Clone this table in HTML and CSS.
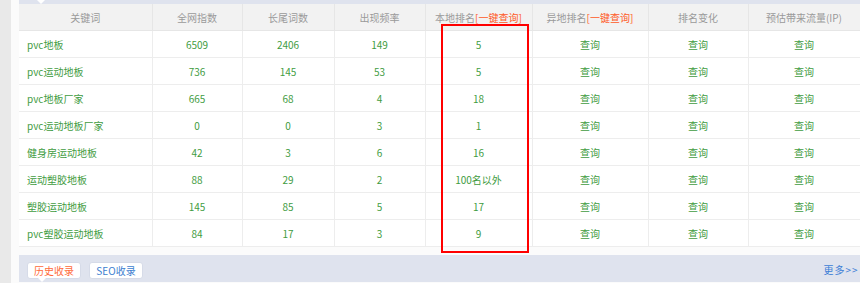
FILE: index.html
```html
<!DOCTYPE html>
<html lang="zh-CN">
<head>
<meta charset="utf-8">
<link rel="stylesheet" href="styles.css">
</head>
<body>
<div class="page">
  <div class="side"></div>
  <div class="main">
    <div class="topbar"><span class="notch"></span></div>
    <table class="grid">
      <colgroup>
        <col style="width:133px"><col style="width:90px"><col style="width:92px"><col style="width:91px">
        <col style="width:107px"><col style="width:116px"><col style="width:100px"><col style="width:112px">
      </colgroup>
      <thead>
        <tr>
          <th>关键词</th><th>全网指数</th><th>长尾词数</th><th>出现频率</th>
          <th>本地排名<span class="hl">[一键查询]</span></th>
          <th>异地排名<span class="hl">[一键查询]</span></th>
          <th>排名变化</th><th>预估带来流量(IP)</th>
        </tr>
      </thead>
      <tbody>
        <tr><td class="kw">pvc地板</td><td>6509</td><td>2406</td><td>149</td><td>5</td><td>查询</td><td>查询</td><td>查询</td></tr>
        <tr><td class="kw">pvc运动地板</td><td>736</td><td>145</td><td>53</td><td>5</td><td>查询</td><td>查询</td><td>查询</td></tr>
        <tr><td class="kw">pvc地板厂家</td><td>665</td><td>68</td><td>4</td><td>18</td><td>查询</td><td>查询</td><td>查询</td></tr>
        <tr><td class="kw">pvc运动地板厂家</td><td>0</td><td>0</td><td>3</td><td>1</td><td>查询</td><td>查询</td><td>查询</td></tr>
        <tr><td class="kw">健身房运动地板</td><td>42</td><td>3</td><td>6</td><td>16</td><td>查询</td><td>查询</td><td>查询</td></tr>
        <tr><td class="kw">运动塑胶地板</td><td>88</td><td>29</td><td>2</td><td>100名以外</td><td>查询</td><td>查询</td><td>查询</td></tr>
        <tr><td class="kw">塑胶运动地板</td><td>145</td><td>85</td><td>5</td><td>17</td><td>查询</td><td>查询</td><td>查询</td></tr>
        <tr><td class="kw">pvc塑胶运动地板</td><td>84</td><td>17</td><td>3</td><td>9</td><td>查询</td><td>查询</td><td>查询</td></tr>
      </tbody>
    </table>
    <div class="footer">
      <span class="btn active">历史收录</span>
      <span class="btn seo">SEO收录</span>
      <span class="more">更多&gt;&gt;</span>
    </div>
    <div class="redbox"></div>
  </div>
</div>
</body>
</html>
```

FILE: styles.css
```css
html, body {
  margin: 0;
  padding: 0;
  background: #fff;
}
body {
  font-family: "Noto Sans CJK SC", "Noto Sans", sans-serif;
  font-size: 10px;
  width: 860px;
  height: 283px;
  overflow: hidden;
}
.page {
  display: flex;
  height: 283px;
}
.side {
  width: 11px;
  flex: none;
  background: #e9e9e9;
}
.main {
  position: relative;
  flex: 1;
  padding-left: 8px;
  background: #fbfbfb;
  display: flex;
  flex-direction: column;
}
.topbar {
  position: relative;
  height: 4px;
  background: #dfe3ee;
}
.notch {
  position: absolute;
  left: 18px;
  top: 0;
  width: 0;
  height: 0;
  border-left: 4px solid transparent;
  border-right: 4px solid transparent;
  border-top: 4px solid #fff;
}
.grid {
  border-collapse: collapse;
  table-layout: fixed;
  width: 841px;
  background: #fff;
}
.grid th {
  height: 26px;
  padding: 0;
  background: #f2f2f2;
  color: #9a9a9a;
  font-weight: normal;
  text-align: center;
  border-left: 1px solid #e6e6e6;
  border-right: 1px solid #e6e6e6;
  border-bottom: 1px solid #e6e6e6;
  white-space: nowrap;
}
.grid th:first-child { border-left: none; }
.hl { color: #ff5a26; }
.grid td {
  height: 26px;
  padding: 0;
  text-align: center;
  color: #3f9c3f;
  border: 1px solid #ededed;
  white-space: nowrap;
}
.grid td:first-child { border-left: none; }
.grid td.kw {
  text-align: left;
  padding-left: 8px;
}
.footer {
  margin-top: 8px;
  height: 27px;
  background: #dfe3ee;
  display: flex;
  align-items: center;
  padding-left: 8px;
  gap: 8px;
}
.btn {
  position: relative;
  height: 17px;
  width: 54px;
  box-sizing: border-box;
  background: #fff;
  border-radius: 3px;
  border: 1px solid #d6dbe8;
  display: flex;
  align-items: center;
  justify-content: center;
  font-size: 10px;
  color: #3c7ed0;
  margin-top: 4px;
}
.btn.active { color: #ff6a3a; }
.btn.active::after {
  content: "";
  position: absolute;
  left: 10px;
  bottom: -4px;
  width: 0;
  height: 0;
  border-left: 4px solid transparent;
  border-right: 4px solid transparent;
  border-top: 4px solid #fff;
}
.more {
  margin-left: auto;
  margin-right: 2px;
  margin-top: 2px;
  color: #3c7ed6;
  letter-spacing: 1px;
}
.redbox {
  position: absolute;
  left: 430px;
  top: 24px;
  width: 84px;
  height: 225px;
  border: 2px solid #ff0000;
}
```
